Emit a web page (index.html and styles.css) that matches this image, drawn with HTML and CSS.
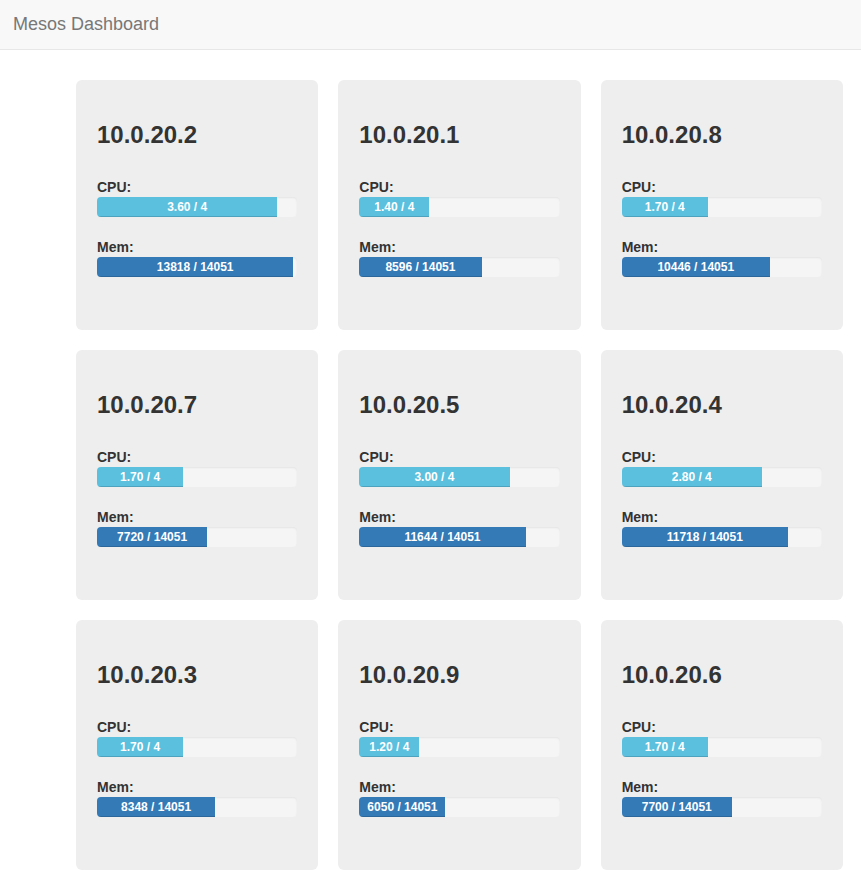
FILE: index.html
```html
<!DOCTYPE html>
<html lang="en">
<head>
<meta charset="utf-8">
<meta name="viewport" content="width=device-width, initial-scale=1">
<title>Mesos Dashboard</title>
<link rel="stylesheet" href="styles.css">
</head>
<body>
<nav class="navbar"><a class="navbar-brand" href="#">Mesos Dashboard</a></nav>
<main class="nodes" id="nodes"></main>
<script src="app.js"></script>
</body>
</html>
```
FILE: app.js
```js
const nodes = [
  ["10.0.20.2", "3.60", 4, 13818, 14051],
  ["10.0.20.1", "1.40", 4, 8596, 14051],
  ["10.0.20.8", "1.70", 4, 10446, 14051],
  ["10.0.20.7", "1.70", 4, 7720, 14051],
  ["10.0.20.5", "3.00", 4, 11644, 14051],
  ["10.0.20.4", "2.80", 4, 11718, 14051],
  ["10.0.20.3", "1.70", 4, 8348, 14051],
  ["10.0.20.9", "1.20", 4, 6050, 14051],
  ["10.0.20.6", "1.70", 4, 7700, 14051]
];

function meter(id, label, kind, used, total) {
  const percent = Math.round(used / total * 100);
  return `<div class="resource">
    <div class="resource-label" id="${id}">${label}</div>
    <div class="progress" role="progressbar" aria-labelledby="${id}" aria-valuenow="${used}" aria-valuemin="0" aria-valuemax="${total}">
      <div class="progress-bar ${kind}" style="width: ${percent}%">${used} / ${total}</div>
    </div>
  </div>`;
}

document.getElementById("nodes").innerHTML = nodes.map(([ip, cpu, cpus, mem, memTotal], i) =>
  `<section class="node">
    <h3 class="node-name">${ip}</h3>
    ${meter("cpu-" + i, "CPU:", "progress-cpu", cpu, cpus)}
    ${meter("mem-" + i, "Mem:", "progress-mem", mem, memTotal)}
  </section>`).join("");
```
FILE: styles.css
```css
* {
  box-sizing: border-box;
}

body {
  margin: 0;
  background: #fff;
  color: #333;
  font-family: "Liberation Sans", Arial, sans-serif;
  font-size: 14px;
  line-height: 20px;
}

.navbar {
  min-height: 50px;
  padding: 14px 13px;
  background: #f8f8f8;
  border-bottom: 1px solid #e7e7e7;
}

.navbar-brand {
  display: inline-block;
  color: #777;
  font-size: 18px;
  text-decoration: none;
}

.nodes {
  display: grid;
  grid-template-columns: repeat(3, 1fr);
  gap: 20px;
  padding: 30px 18px 15px 76px;
}

.node {
  min-height: 250px;
  padding: 42px 21px 20px;
  background: #eee;
  border-radius: 6px;
}

.node-name {
  margin: 0 0 29px;
  font-size: 24px;
  font-weight: bold;
  line-height: 26px;
}

.resource {
  margin-bottom: 20px;
}

.resource-label {
  font-weight: bold;
}

.progress {
  height: 20px;
  overflow: hidden;
  background: #f5f5f5;
  border-radius: 4px;
  box-shadow: inset 0 1px 2px rgba(0, 0, 0, 0.07);
}

.progress-bar {
  height: 100%;
  color: #fff;
  font-size: 12px;
  font-weight: bold;
  text-align: center;
  white-space: nowrap;
  box-shadow: inset 0 -1px 0 rgba(0, 0, 0, 0.15);
}

.progress-cpu {
  background: #5bc0de;
}

.progress-mem {
  background: #337ab7;
}
```
